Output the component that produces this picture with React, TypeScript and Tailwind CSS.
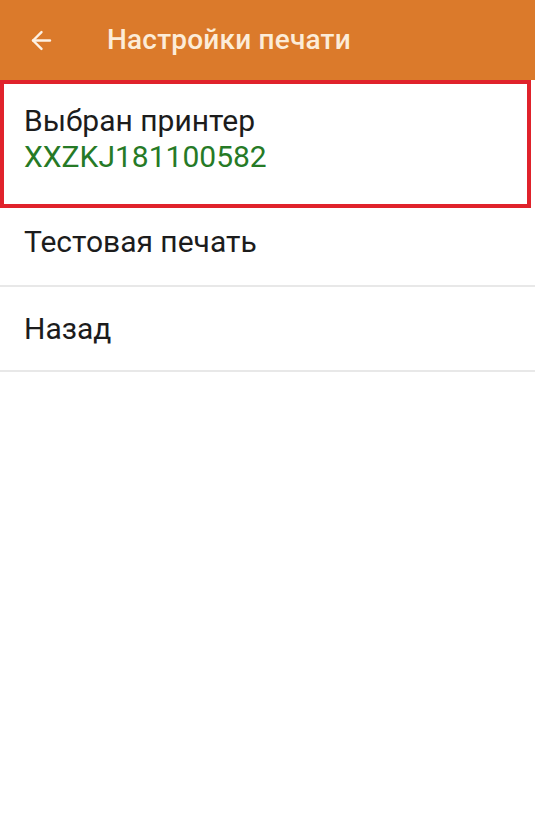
import { ArrowLeft } from "lucide-react";

const font = { fontFamily: "Roboto, 'Noto Sans', sans-serif" };

export default function App() {
  return (
    <div className="w-[535px] h-[823px] bg-white" style={font}>
      <header className="h-[80px] bg-[#db7a2b] flex items-center">
        <ArrowLeft className="ml-[27px] w-[29px] h-[29px] text-[#fdf1e4]" strokeWidth={2} />
        <h1 className="ml-[51px] text-[28px] font-medium text-[#fcecd8] tracking-[0.2px]">
          Настройки печати
        </h1>
      </header>

      <div className="w-[531px] h-[128px] border-4 border-[#e0222b] pl-[20px] pt-[19px]">
        <div className="text-[30px] leading-[36px] text-[#1c1c1c]">Выбран принтер</div>
        <div className="text-[30px] leading-[36px] text-[#267a26]">XXZKJ181100582</div>
      </div>

      <div className="h-[79px] pt-[15px] pl-[24px] border-b-2 border-[#e8e8e8] text-[30px] leading-[37px] text-[#1c1c1c]">
        Тестовая печать
      </div>
      <div className="h-[85px] pt-[23px] pl-[24px] border-b-2 border-[#e8e8e8] text-[30px] leading-[37px] text-[#1c1c1c]">
        Назад
      </div>
    </div>
  );
}
